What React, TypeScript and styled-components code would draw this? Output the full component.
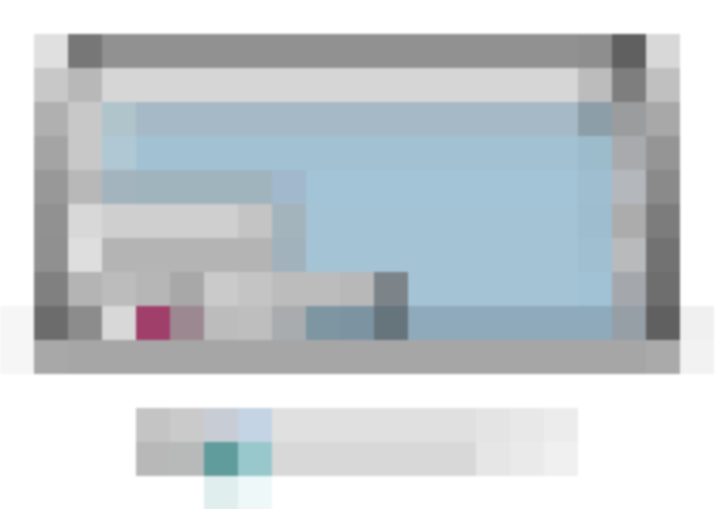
import styled, { createGlobalStyle } from "styled-components";

const CELL = 34;
const COLS = 21;

// each row: comma separated hex colours, "x*n" repeats, "W" is white
const ROWS = [
  "W*21",
  "W,e0e0e0,777777,919191*14,8e8e8e,606060,d8d8d8,W",
  "W,c8c8c8,b8b8b8,d6d6d6*14,bcbcbc,7e7e7e,c0c0c0,W",
  "W,b0b0b0,c8c8c8,b0c4cc,a6b9c6*13,8c9ea8,9a9c9e,a8a8a8,W",
  "W,a4a4a4,c8c8c8,b0c8d4,a2c2d4*13,9cbccc,a8aaae,959595,W",
  "W,989898,b8b8b8,a4b4be,a0b4be*4,a2b8cc,a3c3d6*8,9fbfd0,b4b8bc,8a8a8a,W",
  "W,919191,d8d8d8,cfcfcf*4,c4c4c4,a4b4bc,a4c4d6*8,9ebed0,acacac,7c7c7c,W",
  "W,909090,dedede,b4b4b4*5,a2b2bc,a4c4d6*8,a0c0d2,b8babb,727272,W",
  "W,808080,b4b4b4,bcbcbc,b6b6b6,a8a8a8,cacaca,c4c4c4,bcbcbc,bcbcbc,b8b8b8,7c8489,a4c4d6*5,a0c2d4,a4a8ac,6e6e6e,W",
  "f6f6f6,6c6c6c,8c8c8c,d8d8d8,a0406a,9c8890,bcbcbc,bebebe,a8acae,7e96a2,7c94a2,66747c,8eaabb*6,969ea6,606060,f0f0f0",
  "f6f6f6,a8a8a8,a6a6a6*17,aaaaaa,f2f2f2",
  "W*21",
  "W*4,c4c4c4,cacaca,c8ccd4,c4d4e4,e0e0e0*6,e4e4e4,e8e8e8,ececec,W*4",
  "W*4,b8b8b8,b8baba,609c9c,98c8cc,d8d8d8*6,e6e6e6,eaeaea,f0f0f0,W*4",
  "W*6,e0eeee,eef8f8,W*13",
];

const parseRow = (row: string) =>
  row.split(",").flatMap((part) => {
    const [hex, n] = part.split("*");
    const color = hex === "W" ? "#ffffff" : `#${hex}`;
    return Array(n ? Number(n) : 1).fill(color);
  });

const GlobalStyle = createGlobalStyle`
  html, body {
    margin: 0;
    padding: 0;
    background: #ffffff;
    overflow: hidden;
  }
`;

const Page = styled.div`
  width: 720px;
  height: 509px;
  overflow: hidden;
  background: #ffffff;
`;

const Mosaic = styled.div`
  display: grid;
  grid-template-columns: repeat(${COLS}, ${CELL}px);
  grid-auto-rows: ${CELL}px;
  filter: blur(1px);
`;

const Pixel = styled.div<{ $color: string }>`
  background: ${(p) => p.$color};
`;

function App() {
  return (
    <Page>
      <GlobalStyle />
      <Mosaic>
        {ROWS.map((row, r) =>
          parseRow(row).map((color, c) => (
            <Pixel key={`${r}-${c}`} $color={color} />
          ))
        )}
      </Mosaic>
    </Page>
  );
}

export default App;
